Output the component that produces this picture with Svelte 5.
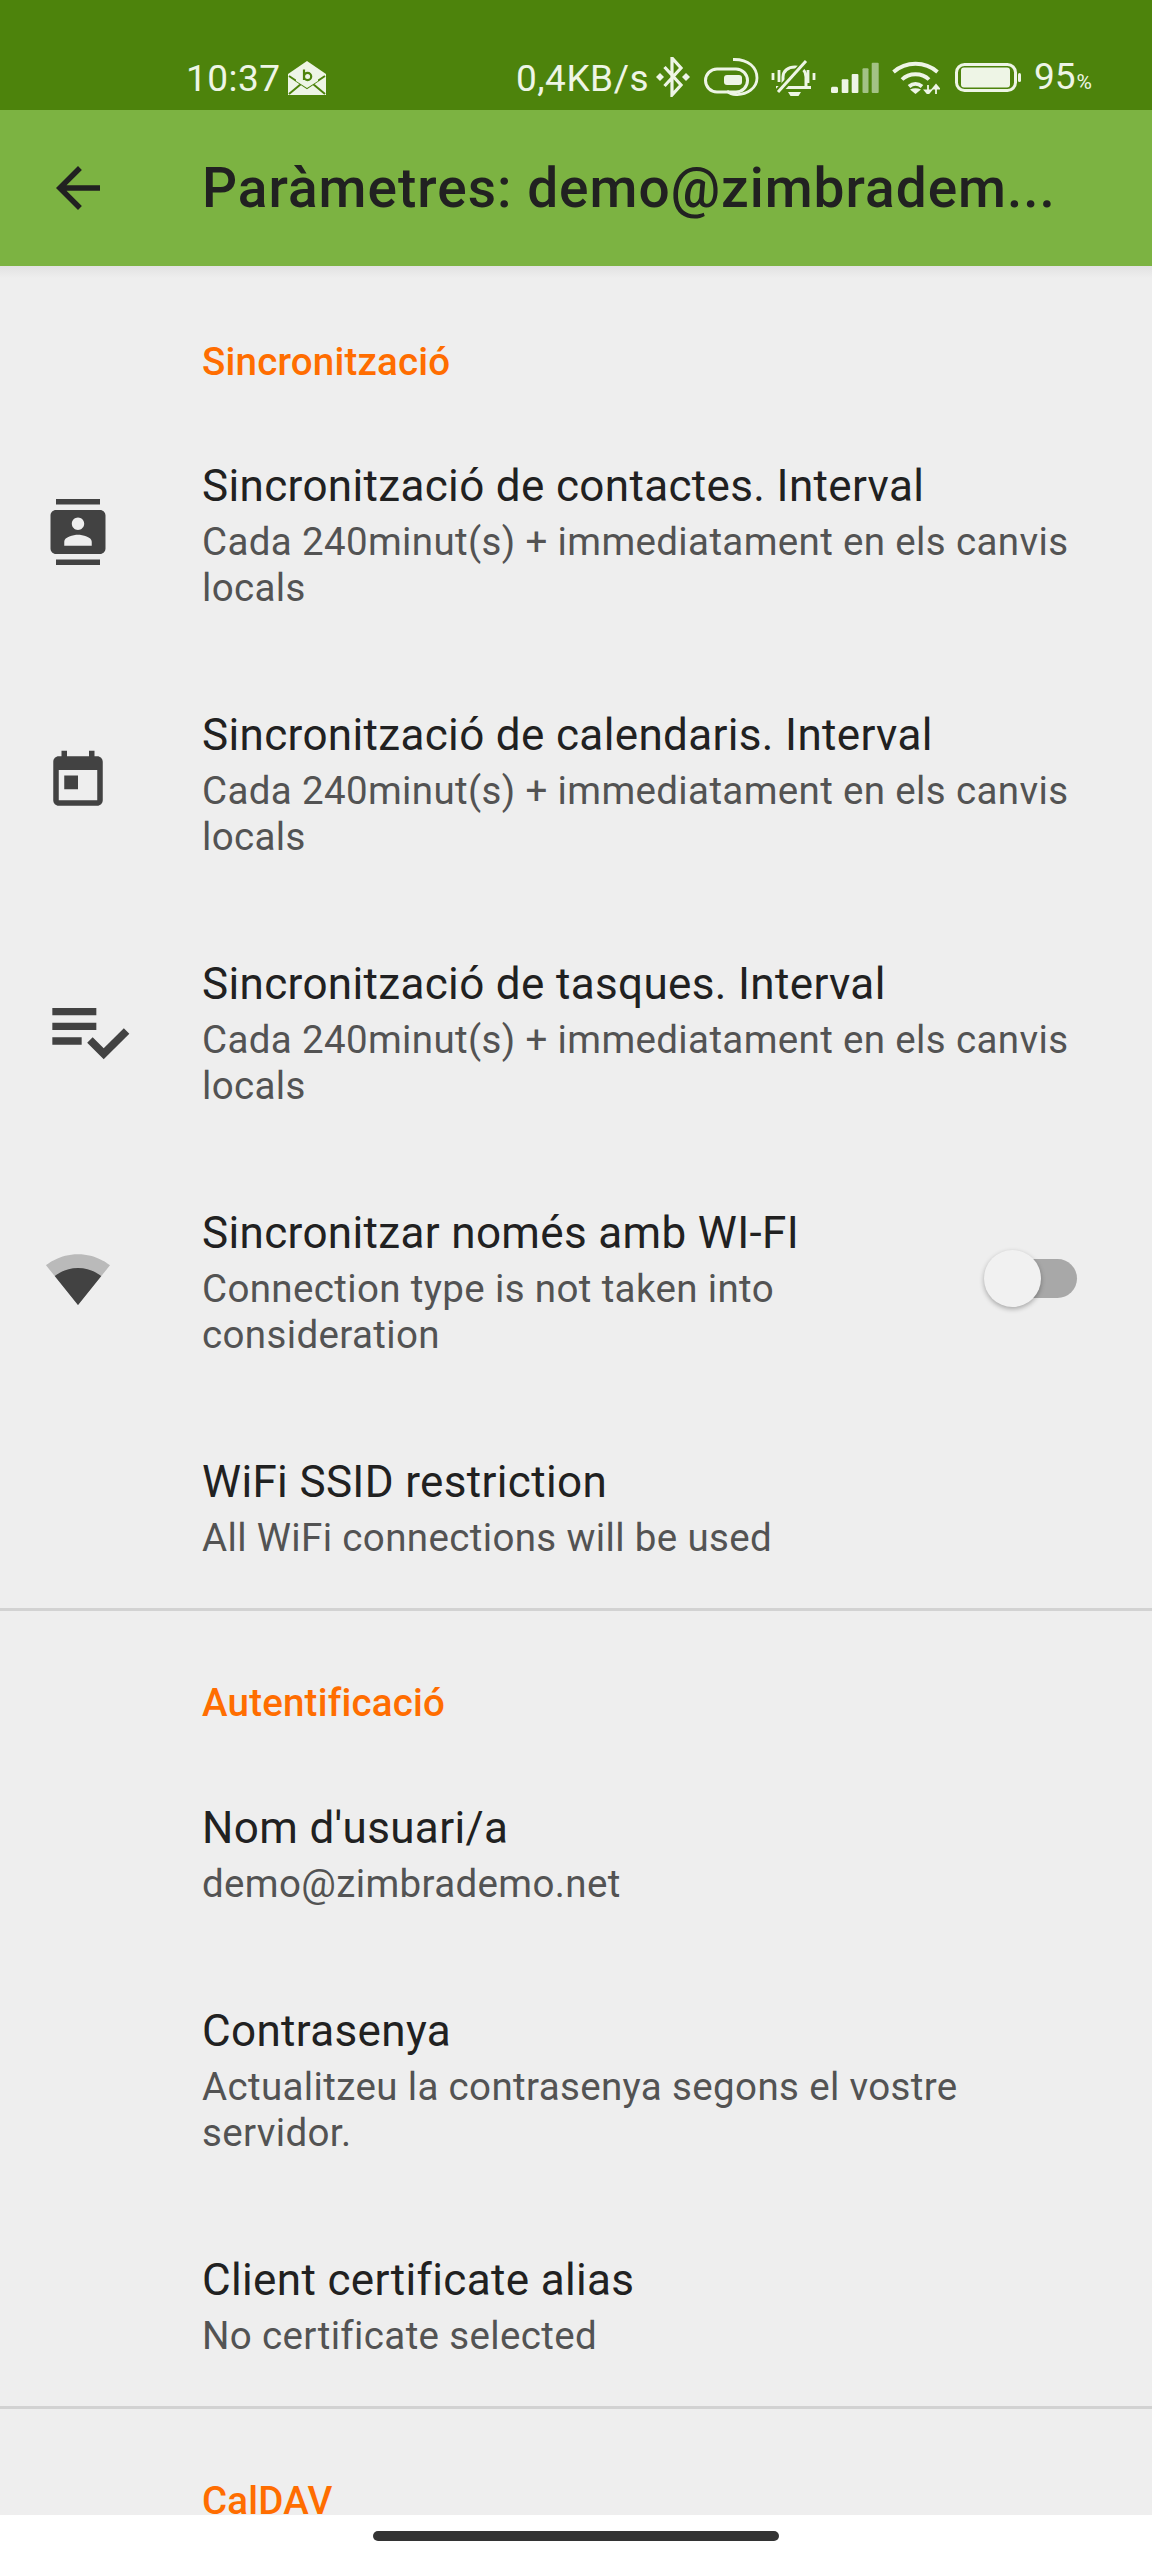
<script>
  const sum = 'Cada 240minut(s) + immediatament en els canvis locals';
</script>

<div class="phone">
  <div class="status">
    <span class="time">10:37</span>
    <svg class="env" viewBox="0 0 38 34" width="38" height="34">
      <path d="M19 0 38 13V34H0V13Z" fill="#eef5e6"/>
      <path d="M1 15 19 27 37 15M1 33 13 23M37 33 25 23" fill="none" stroke="#4d830c" stroke-width="2"/>
      <path d="M8 12H30V20L19 27 8 20Z" fill="#eef5e6"/>
      <path d="M16 8.500V19M16 15.500a3.600 3.600 0 1 0 7.200 0a3.600 3.600 0 1 0-7.200 0" fill="none" stroke="#4d830c" stroke-width="2.200"/>
    </svg>
    <div class="right">
      <span class="speed">0,4KB/s</span>
      <svg class="bt" viewBox="0 0 35 40" width="35" height="40">
        <path d="M9.500 10 26 28 17 38V1L26 11 9.500 29" fill="none" stroke="#eef5e6" stroke-width="3.200"/>
        <path d="M5 16 9 20 5 24 1 20ZM31 16 35 20 31 24 27 20Z" fill="#eef5e6"/>
      </svg>
      <svg class="sim" viewBox="0 0 55 38" width="55" height="38">
        <rect x="1.500" y="11" width="42" height="23" rx="11.500" fill="none" stroke="#eef5e6" stroke-width="3"/>
        <rect x="20" y="15" width="18" height="10" rx="3" fill="#eef5e6" transform="translate(0 2)"/>
        <path d="M29 1.500C45 1 53 10 53 20S43 37 32 36.500C28 36.500 25 35 23 33" fill="none" stroke="#eef5e6" stroke-width="2.800"/>
      </svg>
      <svg class="bell" viewBox="0 0 45 36" width="45" height="36">
        <path d="M12 26V17C12 11 17 7 24 7S35 11 35 17V26M5 27.500H40" fill="none" stroke="#eef5e6" stroke-width="3"/>
        <path d="M17 32H30L27.500 36H19.500Z" fill="#eef5e6"/>
        <path d="M6 33 36 1" stroke="#4d830c" stroke-width="7"/>
        <path d="M7 32 35 1" stroke="#eef5e6" stroke-width="3"/>
        <path d="M2 13V20M8 10V22M37 10V23M43 13V20" stroke="#eef5e6" stroke-width="2.800"/>
      </svg>
      <svg class="sig" viewBox="0 0 48 31" width="48" height="31">
        <rect x="0" y="24.700" width="7" height="6.300" rx="1.500" fill="#eef5e6"/>
        <rect x="10.700" y="17.300" width="6.700" height="13.700" rx="1" fill="#eef5e6"/>
        <rect x="20.700" y="12" width="6.700" height="19" rx="1" fill="#eef5e6"/>
        <rect x="31.500" y="6.300" width="6" height="24.700" rx="1" fill="#a3c285"/>
        <rect x="40.700" y="0.700" width="7" height="30.300" rx="1" fill="#a3c285"/>
      </svg>
      <svg class="wifi" viewBox="0 0 49 34" width="49" height="34">
        <path d="M2.500 12C15 1 34 1 46.500 12M11 19.500C18 12.500 31 12.500 38 19.500M18 26.500C22 23 27 23 31 26.500" fill="none" stroke="#eef5e6" stroke-width="3.800"/>
        <path d="M19 29.500Q24.500 27 30 29.500L24.500 34Z" fill="#eef5e6"/>
        <path d="M37 25V34M34 30.500 37 34 40 30.500ZM45 34V25M42 28.500 45 25 48 28.500Z" fill="#eef5e6" stroke="#eef5e6" stroke-width="1.800"/>
      </svg>
      <svg class="bat" viewBox="0 0 66 29" width="66" height="29">
        <rect x="1.500" y="1.500" width="59" height="26" rx="8" fill="none" stroke="#eef5e6" stroke-width="3"/>
        <rect x="6" y="4.500" width="49" height="20" rx="3" fill="#eef5e6"/>
        <rect x="63" y="10" width="3" height="9" rx="1.500" fill="#eef5e6"/>
      </svg>
      <span class="pct">95<small>%</small></span>
    </div>
  </div>

  <header class="bar">
    <svg class="back" viewBox="0 0 24 24" width="66" height="66"><path d="M20 11H7.830l5.590-5.590L12 4l-8 8 8 8 1.410-1.410L7.830 13H20z" fill="#212121"/></svg>
    <h1>Paràmetres: demo@zimbradem...</h1>
  </header>

  <main class="content">
    <div class="shade"></div>

    <h2 class="first">Sincronització</h2>
    <div class="row">
      <div class="ic"><svg viewBox="0 0 24 24" width="66" height="66"><path d="M20 0H4v2h16V0zM4 24h16v-2H4v2zM20 4H4c-1.100 0-2 .9-2 2v12c0 1.100.9 2 2 2h16c1.100 0 2-.9 2-2V6c0-1.100-.9-2-2-2zm-8 2.750c1.240 0 2.250 1.010 2.250 2.250s-1.010 2.250-2.250 2.250S9.750 10.240 9.750 9 10.760 6.750 12 6.750zM17 17H7v-1.500c0-1.670 3.330-2.500 5-2.500s5 .83 5 2.500V17z"/></svg></div>
      <div class="txt"><div class="t">Sincronització de contactes. Interval</div><div class="s">{sum}</div></div>
    </div>
    <div class="row">
      <div class="ic"><svg viewBox="0 0 24 24" width="66" height="66"><path d="M19 3h-1V1h-2v2H8V1H6v2H5c-1.110 0-1.990.9-1.990 2L3 19c0 1.100.89 2 2 2h14c1.100 0 2-.9 2-2V5c0-1.100-.9-2-2-2zm0 16H5V8h14v11zM7 10h5v5H7z"/></svg></div>
      <div class="txt"><div class="t">Sincronització de calendaris. Interval</div><div class="s">{sum}</div></div>
    </div>
    <div class="row">
      <div class="ic"><svg viewBox="0 0 24 24" width="88" height="88"><path d="M14 10H2v2h12v-2zm0-4H2v2h12V6zM2 16h8v-2H2v2zm19.500-4.500L23 13l-6.990 7-4.510-4.500L13 14l3.010 3 5.490-5.500z"/></svg></div>
      <div class="txt"><div class="t">Sincronització de tasques. Interval</div><div class="s">{sum}</div></div>
    </div>
    <div class="row">
      <div class="ic"><svg viewBox="0 0 24 24" width="66" height="66"><path d="M12.010 21.490L23.640 7c-.45-.34-4.930-4-11.640-4C5.280 3 .81 6.660.36 7l11.630 14.490.01.01.01-.01z" fill-opacity=".3"/><path d="M3.530 10.950l8.460 10.540.01.01.01-.01 8.460-10.540C20.040 10.620 16.810 8 12 8c-4.810 0-8.040 2.620-8.470 2.950z"/></svg></div>
      <div class="txt narrow"><div class="t">Sincronitzar només amb WI-FI</div><div class="s">Connection type is not taken into consideration</div></div>
      <div class="sw"><span class="track"></span><span class="thumb"></span></div>
    </div>
    <div class="row">
      <div class="ic"></div>
      <div class="txt"><div class="t">WiFi SSID restriction</div><div class="s">All WiFi connections will be used</div></div>
    </div>
    <hr />

    <h2>Autentificació</h2>
    <div class="row"><div class="ic"></div><div class="txt"><div class="t">Nom d'usuari/a</div><div class="s">demo@zimbrademo.net</div></div></div>
    <div class="row"><div class="ic"></div><div class="txt"><div class="t">Contrasenya</div><div class="s">Actualitzeu la contrasenya segons el vostre servidor.</div></div></div>
    <div class="row"><div class="ic"></div><div class="txt"><div class="t">Client certificate alias</div><div class="s">No certificate selected</div></div></div>
    <hr />

    <h2>CalDAV</h2>
  </main>

  <footer class="nav"><span class="pill"></span></footer>
</div>

<style>
  :global(body) { margin: 0; }
  .phone { width: 1152px; height: 2560px; display: flex; flex-direction: column; overflow: hidden; font-family: Roboto, sans-serif; background: #fff; }

  .status { height: 110px; box-sizing: border-box; flex: none; background: #4d830c; color: #eef5e6; display: flex; align-items: center; padding: 48px 60px 0 186px; font-size: 37px; }
  .time { width: 93px; line-height: 36px; letter-spacing: .5px; }
  .env { margin-left: 9px; margin-top: -2px; }
  .right { margin-left: auto; display: flex; align-items: center; }
  .speed { line-height: 36px; letter-spacing: .5px; }
  .bt { margin-left: 6px; margin-top: -4px; }
  .sim { margin-left: 14px; margin-top: -4px; }
  .bell { margin-left: 12px; margin-top: -2px; }
  .sig { margin-left: 15px; margin-top: -3px; }
  .wifi { margin-left: 12px; margin-top: -4px; }
  .bat { margin-left: 15px; margin-top: -3px; }
  .pct { margin-left: 13px; line-height: 36px; }
  .pct small { font-size: 21px; margin-left: 1px; }

  .bar { height: 156px; flex: none; background: #7cb342; display: flex; align-items: center; padding-left: 45px; position: relative; z-index: 1; }
  .back { flex: none; }
  h1 { margin: 0 0 0 91px; font-size: 55px; font-weight: 500; letter-spacing: 1px; color: #212121; white-space: nowrap; }

  .content { flex: 1; min-height: 0; overflow: hidden; background: #eeeeee; position: relative; }
  .shade { position: absolute; left: 0; right: 0; top: 0; height: 12px; background: linear-gradient(#e2e2e2, #eeeeee); }

  h2 { margin: 0; padding: 64px 0 20px 202px; font-size: 38.500px; line-height: 56px; font-weight: 500; letter-spacing: .2px; color: #ff6d00; }
  h2.first { padding: 68px 0 19px 202px; }

  .row { display: flex; align-items: center; padding: 47px 60px 47px 45px; }
  .ic { width: 157px; flex: none; height: 66px; margin-top: -3px; display: flex; align-items: center; }
  .ic svg { flex: none; fill: #424242; }
  .txt { flex: 1; min-width: 0; }
  .narrow { padding-right: 190px; }
  .t { font-size: 44px; line-height: 60px; margin-bottom: 3px; letter-spacing: .35px; color: #212121; }
  .s { font-size: 38.500px; line-height: 46px; letter-spacing: .36px; color: #535353; }

  .sw { position: absolute; left: 984px; width: 93px; height: 58px; margin-top: -3px; }
  .track { position: absolute; left: 18px; right: 0; top: 9px; height: 39px; border-radius: 20px; background: #a8a8a8; }
  .thumb { position: absolute; left: 0; top: 0; width: 57px; height: 57px; border-radius: 50%; background: #f1f1f1; box-shadow: 0 2px 5px rgba(0,0,0,.3); }

  hr { margin: 0; border: 0; height: 3px; background: #d2d2d2; }

  .nav { height: 45px; flex: none; background: #fff; display: flex; justify-content: center; padding-top: 16px; box-sizing: border-box; }
  .pill { width: 406px; height: 10px; border-radius: 5px; background: #333333; }
</style>
